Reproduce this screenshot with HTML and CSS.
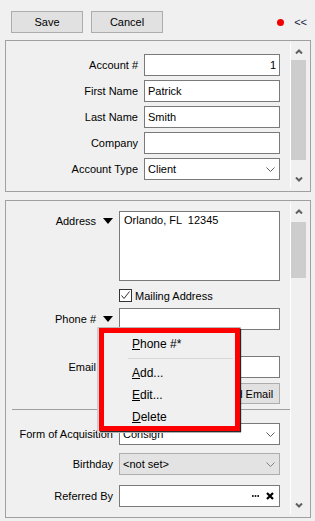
FILE: index.html
```html
<!DOCTYPE html>
<html lang="en">
<head>
    <meta charset="UTF-8">
    <title>Customer</title>
    <meta name="viewport" content="width=device-width, initial-scale=1.0">
    <link rel="stylesheet" href="styles.css">
</head>
<body>
    <div class="toolbar">
        <button class="btn">Save</button>
        <button class="btn">Cancel</button>
        <span class="dot"></span>
        <span class="collapse">&lt;&lt;</span>
    </div>

    <section class="panel panel-top">
        <div class="panel-body form-top">
            <label>Account #</label>
            <input class="field num" value="1" readonly>
            <label>First Name</label>
            <input class="field" value="Patrick" readonly>
            <label>Last Name</label>
            <input class="field" value="Smith" readonly>
            <label>Company</label>
            <input class="field" value="" readonly>
            <label>Account Type</label>
            <div class="field combo">
                <span>Client</span>
                <svg width="9" height="5" viewBox="0 0 9 5"><polyline points="0.5,0.5 4.5,4.5 8.5,0.5" fill="none" stroke="#606060"/></svg>
            </div>
        </div>
        <div class="vscroll">
            <div class="arrow"><svg width="8" height="5" viewBox="0 0 8 5"><polyline points="1,4.5 4,1.5 7,4.5" fill="none" stroke="#606060" stroke-width="2"/></svg></div>
            <div class="thumb thumb-top"></div>
            <div class="track"></div>
            <div class="arrow"><svg width="8" height="5" viewBox="0 0 8 5"><polyline points="1,0.5 4,3.5 7,0.5" fill="none" stroke="#606060" stroke-width="2"/></svg></div>
        </div>
    </section>

    <section class="panel panel-bottom">
        <div class="panel-body form-bottom">
            <div class="row row-address">
                <label>Address</label>
                <span class="drop"></span>
                <textarea class="field area" readonly>Orlando, FL  12345</textarea>
            </div>
            <div class="row row-check">
                <span></span><span></span>
                <div class="check">
                    <span class="box"><svg width="11" height="11" viewBox="0 0 11 11"><polyline points="1.5,5.5 4,8.5 9.5,1.5" fill="none" stroke="#333" stroke-width="1"/></svg></span>
                    Mailing Address
                </div>
            </div>
            <div class="row row-phone">
                <label>Phone #</label>
                <span class="drop"></span>
                <input class="field" value="" readonly>
            </div>
            <div class="row row-email">
                <label>Email</label>
                <span></span>
                <input class="field" value="psmith@example.com" readonly>
            </div>
            <div class="row row-send">
                <span></span><span></span>
                <button class="btn btn-send">Send Email</button>
            </div>
            <hr class="sep">
            <div class="row row-wide row-form">
                <label>Form of Acquisition</label>
                <div class="field combo">
                    <span>Consign</span>
                    <svg width="9" height="5" viewBox="0 0 9 5"><polyline points="0.5,0.5 4.5,4.5 8.5,0.5" fill="none" stroke="#606060"/></svg>
                </div>
            </div>
            <div class="row row-wide row-birthday">
                <label>Birthday</label>
                <div class="field combo disabled">
                    <span>&lt;not set&gt;</span>
                    <svg width="9" height="5" viewBox="0 0 9 5"><polyline points="0.5,0.5 4.5,4.5 8.5,0.5" fill="none" stroke="#808080"/></svg>
                </div>
            </div>
            <div class="row row-wide row-referred">
                <label>Referred By</label>
                <div class="field picker">
                    <svg width="7" height="2" viewBox="0 0 7 2"><rect x="0" y="0" width="1.6" height="2" fill="#222"/><rect x="2.7" y="0" width="1.6" height="2" fill="#222"/><rect x="5.4" y="0" width="1.6" height="2" fill="#222"/></svg>
                    <svg width="8" height="8" viewBox="0 0 8 8"><path d="M1 1 L7 7 M7 1 L1 7" stroke="#000" stroke-width="2.2"/></svg>
                </div>
            </div>
        </div>
        <div class="vscroll">
            <div class="arrow"><svg width="8" height="5" viewBox="0 0 8 5"><polyline points="1,4.5 4,1.5 7,4.5" fill="none" stroke="#606060" stroke-width="2"/></svg></div>
            <div class="thumb thumb-bottom"></div>
            <div class="track"></div>
            <div class="arrow"><svg width="8" height="5" viewBox="0 0 8 5"><polyline points="1,0.5 4,3.5 7,0.5" fill="none" stroke="#606060" stroke-width="2"/></svg></div>
        </div>
    </section>

    <!-- popup menu for the Phone # dropdown -->
    <div class="ctx-menu">
        <div class="item"><u>P</u>hone #*</div>
        <div class="menu-sep"></div>
        <div class="item"><u>A</u>dd...</div>
        <div class="item"><u>E</u>dit...</div>
        <div class="item"><u>D</u>elete</div>
    </div>
    <div class="callout"></div>
</body>
</html>
```

FILE: styles.css
```css
* {
    box-sizing: border-box;
}
body {
    margin: 0;
    width: 315px;
    height: 521px;
    overflow: hidden;
    position: relative;
    background: #f0f0f0;
    color: #000;
    font-family: "Liberation Sans", Arial, sans-serif;
    font-size: 11px;
}
.toolbar {
    display: flex;
    align-items: center;
    gap: 8px;
    height: 40px;
    padding: 4px 8px 0 11px;
}
.btn {
    width: 72px;
    height: 22px;
    padding: 0;
    background: #e1e1e1;
    border: 1px solid #adadad;
    font-family: inherit;
    font-size: 11px;
    color: #000;
}
.dot {
    margin-left: auto;
    width: 7px;
    height: 7px;
    border-radius: 50%;
    background: #f00000;
}
.collapse {
    margin-left: 2px;
    font-size: 11px;
    color: #1a1a40;
}
.panel {
    display: flex;
    width: 306px;
    margin-left: 5px;
    border: 1px solid #a0a0a0;
}
.panel-top {
    height: 152px;
}
.panel-bottom {
    height: 318px;
    margin-top: 8px;
}
.panel-body {
    flex: 1;
    min-width: 0;
}
.vscroll {
    display: flex;
    flex-direction: column;
    width: 16px;
    margin: 2px 4px 3px 0;
    border-left: 1px solid #fff;
}
.arrow {
    height: 17px;
    display: flex;
    align-items: center;
    justify-content: center;
}
.thumb {
    background: #cdcdcd;
}
.thumb-top {
    height: 100px;
}
.thumb-bottom {
    height: 56px;
    margin-top: 2px;
}
.track {
    flex: 1;
}
.field {
    height: 22px;
    margin: 0;
    padding: 0 3px;
    background: #fff;
    border: 1px solid #7a7a7a;
    border-radius: 0;
    font-family: inherit;
    font-size: 11px;
    color: #000;
    outline: none;
}
.num {
    text-align: right;
}
.combo {
    display: flex;
    align-items: center;
    justify-content: space-between;
    padding: 0 4px 0 3px;
}
.combo.disabled {
    background: #e3e3e3;
    border-color: #adadad;
}
.picker {
    display: flex;
    align-items: center;
    justify-content: flex-end;
    gap: 7px;
    padding-right: 5px;
}
.form-top {
    display: grid;
    grid-template-columns: 1fr 136px;
    gap: 4px 6px;
    align-items: center;
    align-content: start;
    padding: 13px 10px 0 0;
}
.form-top label {
    text-align: right;
}
.form-bottom {
    padding-top: 10px;
}
.row {
    display: grid;
    grid-template-columns: 90px 23px 161px;
    align-items: center;
}
.row label {
    text-align: right;
}
.row-wide {
    grid-template-columns: 113px 161px;
}
.row-wide label {
    padding-right: 6px;
}
.drop {
    justify-self: center;
    width: 0;
    height: 0;
    border-left: 5.5px solid transparent;
    border-right: 5.5px solid transparent;
    border-top: 6px solid #000;
}
.row-address {
    align-items: start;
}
.row-address label {
    padding-top: 4px;
}
.row-address .drop {
    margin-top: 7px;
}
.area {
    height: 70px;
    padding: 2px 4px;
    resize: none;
    overflow: hidden;
}
.row-check {
    margin-top: 8px;
}
.check {
    display: flex;
    align-items: center;
    gap: 3px;
    height: 13px;
}
.box {
    display: flex;
    width: 13px;
    height: 13px;
    border: 1px solid #333;
    background: #fff;
}
.row-phone {
    margin-top: 6px;
}
.row-email {
    margin-top: 26px;
}
.row-send {
    margin-top: 5px;
}
.btn-send {
    justify-self: end;
    width: 70px;
    height: 21px;
}
.sep {
    height: 0;
    margin: 5px 0 0 6px;
    border: 0;
    border-top: 1px solid #a0a0a0;
}
.row-form {
    margin-top: 13px;
}
.row-birthday {
    margin-top: 8px;
}
.row-referred {
    margin-top: 10px;
}
.ctx-menu {
    position: absolute;
    left: 97px;
    top: 327px;
    width: 144px;
    height: 106px;
    padding-top: 5px;
    background: #f0f0f0;
    border: 1px solid #cccccc;
    font-size: 12px;
}
.item {
    height: 22px;
    line-height: 22px;
    padding-left: 34px;
}
.menu-sep {
    height: 1px;
    margin: 3px 7px 3px 30px;
    background: #d7d7d7;
}
.callout {
    position: absolute;
    left: 99px;
    top: 328px;
    width: 141px;
    height: 103px;
    border: 5px solid #ff0000;
    box-shadow: 1px 1px 1px rgba(0,0,0,0.8), 0 0 1px rgba(0,0,0,0.6);
}
```
